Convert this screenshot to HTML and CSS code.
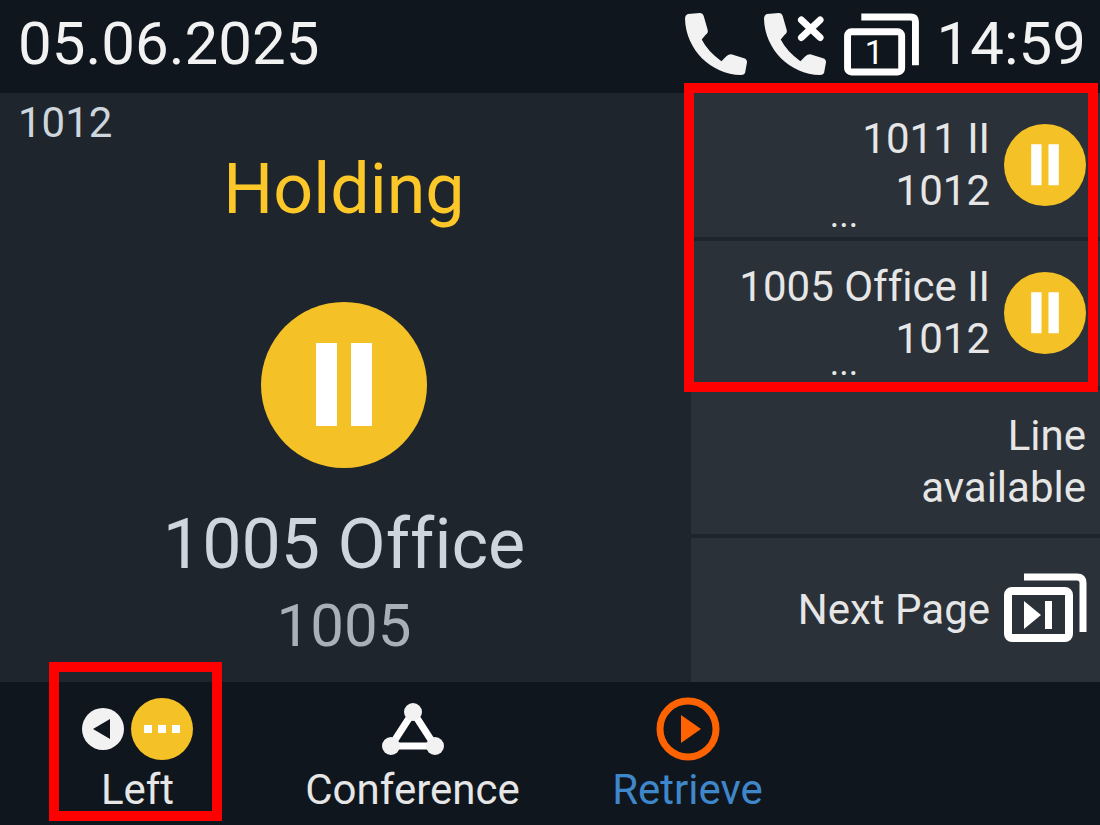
FILE: index.html
```html
<!DOCTYPE html>
<html lang="en">
<head>
    <title>Phone - Holding</title>
    <meta charset="UTF-8">
    <meta name="viewport" content="width=device-width, initial-scale=1.0">
    <link rel="stylesheet" href="styles.css">
</head>
<body>
    <div class="screen">
        <header class="status-bar">
            <span class="date">05.06.2025</span>
            <div class="status-icons">
                <svg class="icon-phone" viewBox="0 0 64 64" aria-hidden="true">
                    <path d="M3 1 L15 0 Q18 0 19 3 L23 17 Q24 20 21 22 L17 27 Q23 39 37 49 L42 44 Q44 42 47 42 L60 46 Q63 47 63 50 L61 61 Q60 63 57 63 C26 62 1 37 0 6 Q0 2 3 1 Z" fill="#f2f2f2"/>
                </svg>
                <svg class="icon-phone" viewBox="0 0 64 64" aria-hidden="true">
                    <path d="M3 1 L15 0 Q18 0 19 3 L23 17 Q24 20 21 22 L17 27 Q23 39 37 49 L42 44 Q44 42 47 42 L60 46 Q63 47 63 50 L61 61 Q60 63 57 63 C26 62 1 37 0 6 Q0 2 3 1 Z" fill="#f2f2f2"/>
                    <path d="M38 7 L57 25 M57 7 L38 25" stroke="#fff" stroke-width="7" stroke-linecap="round"/>
                </svg>
                <svg class="icon-pages" viewBox="0 0 76 64" aria-hidden="true">
                    <rect x="4" y="19" width="55" height="41" rx="4" fill="none" stroke="#fff" stroke-width="7"/>
                    <path d="M18 4 H68 Q73 4 73 9 V53" fill="none" stroke="#fff" stroke-width="7"/>
                    <text class="page-number" x="31" y="52" text-anchor="middle">1</text>
                </svg>
            </div>
            <span class="time">14:59</span>
        </header>

        <main class="content">
            <section class="call">
                <div class="identity">1012</div>
                <h1 class="call-state">Holding</h1>
                <svg class="hold-large" viewBox="0 0 166 166" aria-hidden="true">
                    <circle cx="83" cy="83" r="83" fill="#f4c226"/>
                    <path d="M55 41 H76 V124 H55 Z M90 41 H111 V124 H90 Z" fill="#fff"/>
                </svg>
                <div class="caller-name">1005 Office</div>
                <div class="caller-number">1005</div>
            </section>

            <aside class="lines">
                <button class="line">
                    <span class="line-text">1011 II<br>1012<span class="more">...</span></span>
                    <svg class="line-icon" viewBox="0 0 166 166" aria-hidden="true">
                        <circle cx="83" cy="83" r="83" fill="#f4c226"/>
                        <path d="M55 41 H76 V124 H55 Z M90 41 H111 V124 H90 Z" fill="#fff"/>
                    </svg>
                </button>
                <button class="line">
                    <span class="line-text">1005 Office II<br>1012<span class="more">...</span></span>
                    <svg class="line-icon" viewBox="0 0 166 166" aria-hidden="true">
                        <circle cx="83" cy="83" r="83" fill="#f4c226"/>
                        <path d="M55 41 H76 V124 H55 Z M90 41 H111 V124 H90 Z" fill="#fff"/>
                    </svg>
                </button>
                <button class="line">
                    <span class="line-text">Line<br>available</span>
                </button>
                <button class="line">
                    <span class="line-text">Next Page</span>
                    <svg class="line-icon" viewBox="0 0 82 82" aria-hidden="true">
                        <rect x="4" y="22" width="61" height="47" rx="4" fill="none" stroke="#fff" stroke-width="8"/>
                        <path d="M20 8 H73 Q79 8 79 14 V63" fill="none" stroke="#fff" stroke-width="7"/>
                        <path d="M20 32 L37 46 L20 60 Z M41 32 H48 V60 H41 Z" fill="#fff"/>
                    </svg>
                </button>
                <div class="marker marker-lines"></div>
            </aside>
        </main>

        <nav class="softkeys">
            <button class="softkey">
                <svg class="softkey-icon wide" viewBox="0 0 111 62" aria-hidden="true">
                    <circle cx="21" cy="31" r="21" fill="#f2f2f2"/>
                    <path d="M11 31 L28 21 V41 Z" fill="#10161d"/>
                    <circle cx="80" cy="31" r="31" fill="#f4c226"/>
                    <path d="M62 27 H70 V35 H62 Z M76 27 H84 V35 H76 Z M90 27 H98 V35 H90 Z" fill="#fff"/>
                </svg>
                <span>Left</span>
                <div class="marker marker-key"></div>
            </button>
            <button class="softkey">
                <svg class="softkey-icon" viewBox="0 0 62 62" aria-hidden="true">
                    <path d="M31 14 L53 48 H9 Z" fill="none" stroke="#fff" stroke-width="7"/>
                    <circle cx="31" cy="14" r="9" fill="#f2f2f2"/>
                    <circle cx="9" cy="48" r="9" fill="#f2f2f2"/>
                    <circle cx="53" cy="48" r="9" fill="#f2f2f2"/>
                </svg>
                <span>Conference</span>
            </button>
            <button class="softkey retrieve">
                <svg class="softkey-icon" viewBox="0 0 62 62" aria-hidden="true">
                    <circle cx="31" cy="31" r="28" fill="none" stroke="#ff6200" stroke-width="7"/>
                    <path d="M24 17 L44 31 L24 45 Z" fill="#ff6200"/>
                </svg>
                <span>Retrieve</span>
            </button>
        </nav>
    </div>
</body>
</html>
```
FILE: styles.css
```css
* { box-sizing: border-box; }
body {
    font-family: Roboto, sans-serif;
    font-variant-ligatures: none;
    margin: 0;
    background: #10161d;
    color: #e6e6e6;
}
button { font: inherit; font-variant-ligatures: none; color: inherit; border: none; margin: 0; cursor: pointer; }
svg { display: block; flex: none; overflow: visible; }

.screen { display: flex; flex-direction: column; min-height: 100vh; }

/* top bar */
.status-bar {
    display: flex;
    align-items: center;
    padding: 10px 14px 15px 18px;
    font-size: 60px;
    line-height: 68px;
    color: #f2f2f2;
}
.status-icons { display: flex; gap: 16px; margin-left: auto; margin-right: 18px; }
.icon-phone { width: 63px; height: 63px; }
.icon-pages { width: 76px; height: 63px; }
.page-number { font-size: 34px; fill: #fff; }

/* current call */
.content { flex: 1; display: grid; grid-template-columns: 691fr 409fr; background: #1f252c; }
.call { display: flex; flex-direction: column; align-items: center; padding-right: 3px; color: #cdd5dd; }
.identity { align-self: flex-start; padding: 4px 18px 0; font-size: 42px; line-height: 52px; }
.call-state { margin: 0; font-size: 70px; line-height: 80px; font-weight: normal; color: #fcc728; }
.hold-large { width: 166px; height: 166px; margin: 73px 0 34px; }
.caller-name { font-size: 70px; line-height: 84px; }
.caller-number { font-size: 60px; line-height: 80px; color: #a9b0b8; }

/* line keys */
.lines { position: relative; display: flex; flex-direction: column; gap: 4px; }
.line {
    flex: 1;
    display: flex;
    align-items: center;
    gap: 14px;
    padding: 0 14px 0 7px;
    background: #2b3138;
    font-size: 42px;
    line-height: 52px;
    text-align: right;
}
.line-text { flex: 1; }
.line-icon { width: 82px; height: 82px; }
.more { display: block; margin: -12px 0 -8px; font-size: 36px; line-height: 20px; text-align: center; }

/* soft keys */
.softkeys { display: grid; grid-template-columns: repeat(4, 1fr); }
.softkey {
    position: relative;
    display: flex;
    flex-direction: column;
    align-items: center;
    padding: 16px 0 5px;
    background: none;
    font-size: 42px;
    line-height: 60px;
}
.softkey-icon { width: 62px; height: 62px; }
.softkey-icon.wide { width: 111px; }
.retrieve { color: #3f87cb; }

/* red highlight frames */
.marker { position: absolute; border: 10px solid #f00; pointer-events: none; }
.marker-lines { top: -10px; left: -7px; right: 2px; height: calc(50% + 14px); }
.marker-key { top: -20px; left: 49px; right: 53px; bottom: 4px; }
```
